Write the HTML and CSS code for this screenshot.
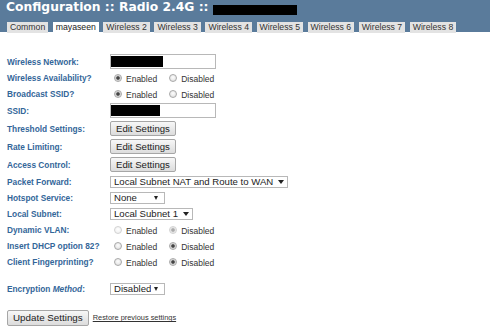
FILE: index.html
```html
<!DOCTYPE html>
<html lang="en">
<head>
  <meta charset="UTF-8" />
  <title>Configuration :: Radio 2.4G</title>
  <link rel="stylesheet" href="styles.css">
</head>
<body>

  <header class="top">
    <h1 class="title">Configuration :: Radio 2.4G :: <span class="redact"></span></h1>
    <nav class="tabs">
      <a class="tab" href="#">Common</a>
      <a class="tab active" href="#">mayaseen</a>
      <a class="tab" href="#">Wireless 2</a>
      <a class="tab" href="#">Wireless 3</a>
      <a class="tab" href="#">Wireless 4</a>
      <a class="tab" href="#">Wireless 5</a>
      <a class="tab" href="#">Wireless 6</a>
      <a class="tab" href="#">Wireless 7</a>
      <a class="tab" href="#">Wireless 8</a>
    </nav>
  </header>

  <form class="config">
    <div class="row">
      <label class="name">Wireless Network:</label>
      <div class="field"><span class="redact"></span></div>
    </div>
    <div class="row">
      <label class="name">Wireless Availability?</label>
      <div class="radios">
        <span class="opt"><span class="radio on"></span><span class="txt">Enabled</span></span>
        <span class="opt"><span class="radio"></span><span class="txt">Disabled</span></span>
      </div>
    </div>
    <div class="row">
      <label class="name">Broadcast SSID?</label>
      <div class="radios">
        <span class="opt"><span class="radio on"></span><span class="txt">Enabled</span></span>
        <span class="opt"><span class="radio"></span><span class="txt">Disabled</span></span>
      </div>
    </div>
    <div class="row tall">
      <label class="name">SSID:</label>
      <div class="field"><span class="redact short"></span></div>
    </div>
    <div class="row tall">
      <label class="name">Threshold Settings:</label>
      <button type="button" class="btn">Edit Settings</button>
    </div>
    <div class="row tall">
      <label class="name">Rate Limiting:</label>
      <button type="button" class="btn">Edit Settings</button>
    </div>
    <div class="row tall">
      <label class="name">Access Control:</label>
      <button type="button" class="btn">Edit Settings</button>
    </div>
    <div class="row">
      <label class="name">Packet Forward:</label>
      <span class="select"><select><option>Local Subnet NAT and Route to WAN</option></select></span>
    </div>
    <div class="row">
      <label class="name">Hotspot Service:</label>
      <span class="select fixed"><select><option>None</option></select></span>
    </div>
    <div class="row">
      <label class="name">Local Subnet:</label>
      <span class="select"><select><option>Local Subnet 1</option></select></span>
    </div>
    <div class="row">
      <label class="name">Dynamic VLAN:</label>
      <div class="radios off">
        <span class="opt"><span class="radio"></span><span class="txt">Enabled</span></span>
        <span class="opt"><span class="radio on"></span><span class="txt">Disabled</span></span>
      </div>
    </div>
    <div class="row">
      <label class="name">Insert DHCP option 82?</label>
      <div class="radios">
        <span class="opt"><span class="radio"></span><span class="txt">Enabled</span></span>
        <span class="opt"><span class="radio on"></span><span class="txt">Disabled</span></span>
      </div>
    </div>
    <div class="row">
      <label class="name">Client Fingerprinting?</label>
      <div class="radios">
        <span class="opt"><span class="radio"></span><span class="txt">Enabled</span></span>
        <span class="opt"><span class="radio on"></span><span class="txt">Disabled</span></span>
      </div>
    </div>

    <div class="row spaced">
      <label class="name">Encryption <i>Method</i>:</label>
      <span class="select fixed"><select><option>Disabled</option></select></span>
    </div>

    <div class="actions">
      <button type="submit" class="btn big">Update Settings</button>
      <a class="restore" href="#">Restore previous settings</a>
    </div>
  </form>

</body>
</html>
```

FILE: styles.css
```css
body {
  margin: 0;
  font-family: "Liberation Sans", Arial, sans-serif;
  background: #fff;
  color: #222;
}

/* header band with title and tabs */
.top {
  background: #5a7b9b;
  height: 32px;
  padding-left: 6px;
}

.title {
  margin: 0;
  font: bold 12.3px/14px "DejaVu Sans", Verdana, sans-serif;
  color: #fff;
  white-space: nowrap;
}

.title .redact {
  display: inline-block;
  width: 84px;
  height: 10px;
  background: #000;
  vertical-align: -4px;
}

.tabs {
  display: flex;
  gap: 4.5px;
  margin-top: 7px;
  padding-left: 1px;
}

.tab {
  height: 11px;
  padding: 0 3px;
  background: #e3e3e3;
  color: #333;
  font-size: 8.7px;
  line-height: 11px;
  text-decoration: none;
  white-space: nowrap;
}

.tab.active {
  background: #fff;
  color: #222;
}

/* form rows */
.config {
  padding: 21.7px 0 0 7px;
}

.row {
  display: flex;
  align-items: center;
  height: 16px;
}

.row.tall {
  height: 18px;
}

.row.spaced {
  margin-top: 11.3px;
}

.name {
  width: 103px;
  flex-shrink: 0;
  font-size: 8.3px;
  font-weight: bold;
  color: #336699;
  white-space: nowrap;
}

.field {
  width: 104px;
  height: 13px;
  border: 1px solid #b8b8b8;
  background: #fff;
}

.field .redact {
  display: block;
  width: 52px;
  height: 11px;
  margin-top: 1px;
  background: #000;
}

.field .redact.short {
  width: 49px;
}

/* radio buttons */
.radios {
  display: flex;
  align-items: center;
  padding-left: 4.3px;
}

.opt {
  display: flex;
  align-items: center;
  gap: 3.7px;
  font-size: 8.5px;
  color: #333;
}

.opt + .opt {
  margin-left: 12.3px;
}

.opt .txt {
  padding-top: 3px;
}

.radio {
  width: 8px;
  height: 8px;
  box-sizing: border-box;
  border-radius: 50%;
  border: 1px solid #a8a8a8;
  background: radial-gradient(circle at 50% 40%, #fdfdfd, #dadada);
}

.radio.on {
  background: radial-gradient(circle, #444 0 1.4px, #bbb 1.9px, #e6e6e6 3px);
}

.radios.off .radio {
  border-color: #d2d2d2;
  background: radial-gradient(circle at 50% 40%, #fff, #ececec);
}

.radios.off .radio.on {
  background: radial-gradient(circle, #aaa 0 1.4px, #d8d8d8 1.9px, #f0f0f0 3px);
}

/* buttons */
.btn {
  height: 15px;
  box-sizing: border-box;
  margin: 0;
  padding: 0 5px;
  border: 1px solid #a6a6a6;
  border-radius: 2px;
  background: linear-gradient(#f7f7f7, #dcdcdc);
  font: 9.6px/13px "Liberation Sans", Arial, sans-serif;
  color: #222;
}

.btn.big {
  height: 16px;
  padding: 0 5px;
  font-size: 9.8px;
}

/* selects */
.select {
  position: relative;
  display: inline-block;
  line-height: 0;
}

.select select {
  appearance: none;
  -webkit-appearance: none;
  height: 12px;
  margin: 0;
  padding: 0 13px 0 3px;
  border: 1px solid #b8b8b8;
  border-radius: 0;
  background: #fff;
  font: 9.6px/10px "Liberation Sans", Arial, sans-serif;
  color: #222;
}

.select.fixed select {
  width: 55px;
}

.select::after {
  content: "";
  position: absolute;
  right: 4px;
  top: 4px;
  border-left: 3px solid transparent;
  border-right: 3px solid transparent;
  border-top: 4px solid #222;
  pointer-events: none;
}

.select.fixed::after {
  right: 7px;
  border-left-width: 2.5px;
  border-right-width: 2.5px;
}

/* bottom buttons */
.actions {
  display: flex;
  align-items: center;
  margin-top: 13px;
}

.restore {
  margin-left: 4px;
  font-size: 7.4px;
  color: #333;
  text-decoration: underline;
}
```
